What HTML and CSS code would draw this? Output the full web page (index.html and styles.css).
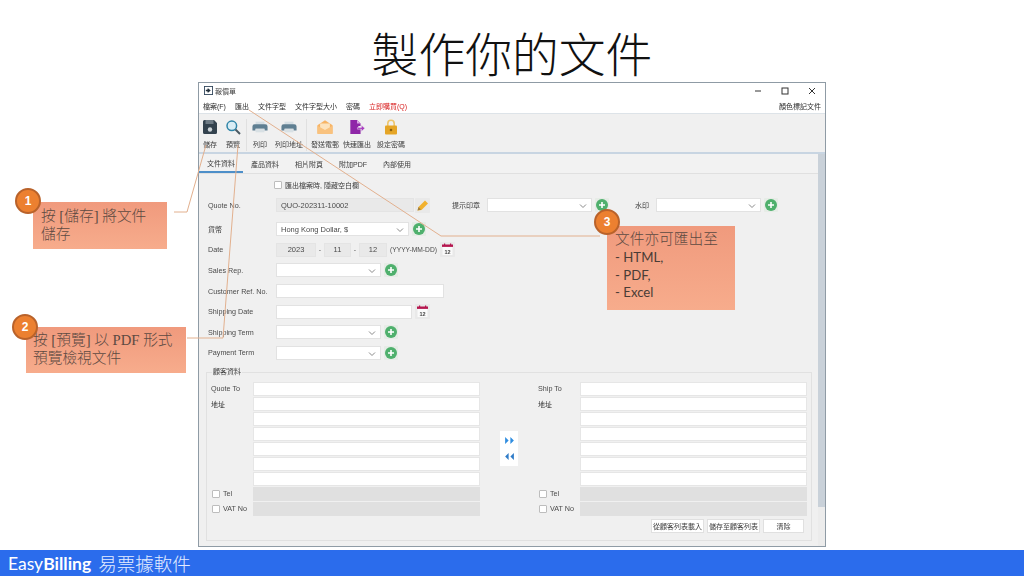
FILE: index.html
```html
<!DOCTYPE html>
<html lang="zh-Hant">
<head>
<meta charset="utf-8">
<title>製作你的文件</title>
<link rel="stylesheet" href="styles.css">
</head>
<body>
<svg class="defs" width="0" height="0">
  <symbol id="chev" viewBox="0 0 8 6"><path d="M1 1.5 4 4.5 7 1.5" fill="none" stroke="#8a8a8a" stroke-width="1"/></symbol>
  <symbol id="plus" viewBox="0 0 14 14"><rect width="14" height="14" rx="1" fill="#e6ece6"/><circle cx="7" cy="7" r="6" fill="#4fb06d"/><path d="M7 4v6M4 7h6" stroke="#fff" stroke-width="1.6"/></symbol>
  <symbol id="printer" viewBox="0 0 18 16"><path d="M4 2h10v4H4z" fill="#d5dee3"/><path d="M3 5h12a2.500 2.500 0 0 1 2.500 2.500V12H14V10H4v2H.5V7.500A2.500 2.500 0 0 1 3 5z" fill="#5f7f92"/><path d="M4 10h10v4H4z" fill="#d8e0e4"/></symbol>
</svg>
<div class="slide">
  <h1 class="title">製作你的文件</h1>
  <div class="spacer"></div>
  <footer class="footer"><span class="brand">Easy<b>Billing</b></span><span class="brand-cjk">易票據軟件</span></footer>

  <section class="window">
    <header class="titlebar">
      <svg class="app-icon" viewBox="0 0 10 10"><rect x=".5" y=".5" width="9" height="9" fill="#fff" stroke="#34495e"/><path d="M2 5h3.200M4 3l2.400 2L4 7" stroke="#22303c" stroke-width="1.400" fill="none"/></svg>
      <span class="win-title">報價單</span>
      <div class="win-controls">
        <svg viewBox="0 0 10 10"><path d="M2 5h6" stroke="#333"/></svg>
        <svg viewBox="0 0 10 10"><rect x="2" y="2" width="6" height="6" fill="none" stroke="#333"/></svg>
        <svg viewBox="0 0 10 10"><path d="M2 2l6 6M8 2l-6 6" stroke="#333"/></svg>
      </div>
    </header>
    <nav class="menubar">
      <span>檔案(F)</span><span>匯出</span><span>文件字型</span><span>文件字型大小</span><span>密碼</span><span class="menu-red">立即購買(Q)</span>
      <span class="menu-right">顏色標記文件</span>
    </nav>
    <div class="toolbar">
      <div class="tool tool-first"><svg viewBox="0 0 16 16"><path d="M1 2.500A1.500 1.500 0 0 1 2.500 1H12l3 3v9.500a1.500 1.500 0 0 1-1.500 1.500h-11A1.500 1.500 0 0 1 1 13.500z" fill="#33424e"/><rect x="3.500" y="1" width="8" height="4" fill="#6e7b85"/><circle cx="8" cy="10.500" r="2.200" fill="#cfd6da"/></svg><span>儲存</span></div>
      <div class="tool tool-g9"><svg viewBox="0 0 16 16"><circle cx="6.800" cy="6.800" r="4.800" fill="#d9edf5" stroke="#2f85a8" stroke-width="1.500"/><path d="M10.500 10.500 15 15" stroke="#4a5a64" stroke-width="2"/></svg><span>預覽</span></div>
      <div class="sep"></div>
      <div class="tool tool-g6"><svg viewBox="0 0 18 16"><use href="#printer"/></svg><span>列印</span></div>
      <div class="tool tool-g8"><svg viewBox="0 0 18 16"><use href="#printer"/></svg><span>列印地址</span></div>
      <div class="sep sep-b"></div>
      <div class="tool tool-g4"><svg viewBox="0 0 18 16"><path d="M9 .5 17.500 6v9.500H.5V6z" fill="#f7b465"/><path d="M3.500 4h11v5L9 12 3.500 9z" fill="#fde3bd"/><path d="M.5 6.500 9 11.500l8.500-5v9H.5z" fill="#f9c27e"/></svg><span>發送電郵</span></div>
      <div class="tool tool-g4"><svg viewBox="0 0 18 16"><path d="M1.500 0H9l4 4v3h-2.500v3H13v6H1.500z" fill="#8f27a8"/><path d="M9 0v4h4z" fill="#d9a5e3"/><path d="M9.500 8.500H14V6l3.800 3.500L14 13v-2.500H9.500z" fill="#a83dc0" stroke="#f0f0f0" stroke-width=".5"/></svg><span>快速匯出</span></div>
      <div class="tool tool-g6"><svg viewBox="0 0 16 16"><path d="M4.800 7V4.500a3.200 3.200 0 0 1 6.400 0V7" fill="none" stroke="#eec66c" stroke-width="1.600"/><rect x="2" y="6.500" width="12" height="9" rx="1" fill="#e5a526"/><circle cx="8" cy="11" r="1.300" fill="#8a5f10"/></svg><span>設定密碼</span></div>
    </div>
    <div class="body">
      <div class="tabs-panel">
        <div class="tabs">
          <span class="tab tab-on">文件資料</span><span class="tab">產品資料</span><span class="tab">相片附頁</span><span class="tab">附加PDF</span><span class="tab">內部使用</span>
        </div>
        <div class="page">
          <label class="check-row"><i class="box"></i>匯出檔案時, 隱藏空白欄</label>
          <div class="row row-quote">
            <span class="lbl">Quote No.</span>
            <div class="field grey w138">QUO-202311-10002</div>
            <span class="icon-btn"><svg viewBox="0 0 15 15"><rect width="15" height="15" rx="1" fill="#e9e9e9"/><path d="M2.500 12.500l1-3.500 6.500-6.500 3 3-6.500 6.500z" fill="#f1b12e"/><path d="M2.500 12.500l1-3.500 2.500 2.500z" fill="#a08040"/></svg></span>
            <span class="lbl-cjk ml22">提示印章</span>
            <div class="field sel w105"><svg class="chev"><use href="#chev"/></svg></div>
            <svg class="plus"><use href="#plus"/></svg>
            <span class="lbl-cjk ml27">水印</span>
            <div class="field sel w105"><svg class="chev"><use href="#chev"/></svg></div>
            <svg class="plus"><use href="#plus"/></svg>
          </div>
          <div class="row row-cur">
            <span class="lbl lbl-c">貨幣</span>
            <div class="field sel w133">Hong Kong Dollar, $<svg class="chev"><use href="#chev"/></svg></div>
            <svg class="plus"><use href="#plus"/></svg>
          </div>
          <div class="row">
            <span class="lbl">Date</span>
            <div class="field grey ctr w40">2023</div><span class="dash">-</span>
            <div class="field grey ctr w27">11</div><span class="dash">-</span>
            <div class="field grey ctr w28">12</div>
            <span class="fmt">(YYYY-MM-DD)</span>
            <svg class="cal" viewBox="0 0 15 15"><rect width="15" height="15" rx="1" fill="#e9e9e9"/><rect x="2.500" y="3" width="10" height="10" fill="#fafafa"/><rect x="2" y="2.500" width="11" height="2.400" fill="#b5174f"/><rect x="4" y="1.500" width="1.200" height="2" fill="#b5174f"/><rect x="10" y="1.500" width="1.200" height="2" fill="#b5174f"/><text x="7.500" y="11.500" text-anchor="middle" class="cal-num">12</text></svg>
          </div>
          <div class="row">
            <span class="lbl">Sales Rep.</span>
            <div class="field sel w105"><svg class="chev"><use href="#chev"/></svg></div>
            <svg class="plus"><use href="#plus"/></svg>
          </div>
          <div class="row">
            <span class="lbl">Customer Ref. No.</span>
            <div class="field w168"></div>
          </div>
          <div class="row">
            <span class="lbl">Shipping Date</span>
            <div class="field w136"></div>
            <svg class="cal" viewBox="0 0 15 15"><rect width="15" height="15" rx="1" fill="#e9e9e9"/><rect x="2.500" y="3" width="10" height="10" fill="#fafafa"/><rect x="2" y="2.500" width="11" height="2.400" fill="#b5174f"/><rect x="4" y="1.500" width="1.200" height="2" fill="#b5174f"/><rect x="10" y="1.500" width="1.200" height="2" fill="#b5174f"/><text x="7.500" y="11.500" text-anchor="middle" class="cal-num">12</text></svg>
          </div>
          <div class="row">
            <span class="lbl">Shipping Term</span>
            <div class="field sel w105"><svg class="chev"><use href="#chev"/></svg></div>
            <svg class="plus"><use href="#plus"/></svg>
          </div>
          <div class="row">
            <span class="lbl">Payment Term</span>
            <div class="field sel w105"><svg class="chev"><use href="#chev"/></svg></div>
            <svg class="plus"><use href="#plus"/></svg>
          </div>
          <fieldset class="customer">
            <legend>顧客資料</legend>
            <div class="cust-grid">
              <div class="party">
                <span>Quote To</span><div class="cell"></div>
                <span class="cjk">地址</span><div class="cell"></div>
                <span></span><div class="cell"></div>
                <span></span><div class="cell"></div>
                <span></span><div class="cell"></div>
                <span></span><div class="cell"></div>
                <span></span><div class="cell"></div>
                <label class="chk"><i class="box"></i>Tel</label><div class="cell off"></div>
                <label class="chk"><i class="box"></i>VAT No</label><div class="cell off"></div>
              </div>
              <div class="arrows">
                <svg viewBox="0 0 12 8"><path d="M1 0l4 4-4 4zM7 0l4 4-4 4z" fill="#2f8de0"/></svg>
                <svg viewBox="0 0 12 8"><path d="M5 0L1 4l4 4zM11 0L7 4l4 4z" fill="#2f7cc8"/></svg>
              </div>
              <div class="party">
                <span>Ship To</span><div class="cell"></div>
                <span class="cjk">地址</span><div class="cell"></div>
                <span></span><div class="cell"></div>
                <span></span><div class="cell"></div>
                <span></span><div class="cell"></div>
                <span></span><div class="cell"></div>
                <span></span><div class="cell"></div>
                <label class="chk"><i class="box"></i>Tel</label><div class="cell off"></div>
                <label class="chk"><i class="box"></i>VAT No</label><div class="cell off"></div>
              </div>
            </div>
            <div class="cust-actions">
              <button class="btn">從顧客列表載入</button><button class="btn">儲存至顧客列表</button><button class="btn btn-clear">清除</button>
            </div>
          </fieldset>
        </div>
      </div>
      <div class="scrollbar"><div class="thumb"></div></div>
    </div>
  </section>

  <svg class="leaders" viewBox="0 0 1024 576">
    <path d="M174 212H187L206 145"/>
    <path d="M187 338H223L238 145"/>
    <path d="M600 236H441L249 110"/>
  </svg>

  <div class="callout c1">按 [儲存] 將文件<br>儲存</div>
  <div class="callout c2">按 [預覽] 以 PDF 形式<br>預覽檢視文件</div>
  <div class="callout c3">文件亦可匯出至<br><span class="latin">- HTML,<br>- PDF,<br>- Excel</span></div>
  <span class="badge b1">1</span>
  <span class="badge b2">2</span>
  <span class="badge b3">3</span>
</div>
</body>
</html>
```
FILE: styles.css
```css
* { box-sizing: border-box; }
html, body { margin: 0; padding: 0; }
body { width: 1024px; height: 576px; overflow: hidden; background: #fff; font-family: "Liberation Sans", "Noto Sans CJK TC", sans-serif; }
.defs { position: absolute; }
.cal-num { font: 700 5.500px "Liberation Sans", sans-serif; fill: #444; }

.slide { position: relative; width: 1024px; height: 576px; display: flex; flex-direction: column; }
.title { margin: 0; padding-top: 20px; text-align: center; font: 300 46.800px/64px "Noto Sans CJK TC", sans-serif; color: #111; }
.spacer { flex: 1; }
.footer { height: 26px; background: #2b6cec; color: #fff; display: flex; align-items: center; padding-left: 8px; gap: 7px; }
.brand { font: 400 17.500px "Lato", sans-serif; }
.brand b { font-weight: 700; }
.brand-cjk { font: 300 18.500px "Noto Sans CJK TC", sans-serif; color: #e4ecff; }

.window { position: absolute; left: 198px; top: 82px; width: 628px; height: 465px; background: #fff; border: 1px solid #8f9ba5; font-size: 7px; color: #3c3c3c; display: flex; flex-direction: column; filter: blur(.35px); }
.titlebar { height: 15px; flex: none; display: flex; align-items: center; padding-left: 5px; gap: 2px; }
.app-icon { width: 9px; height: 9px; }
.win-title { color: #444; }
.win-controls { margin-left: auto; display: flex; gap: 17px; padding-right: 8px; }
.win-controls svg { width: 10px; height: 10px; }
.menubar { height: 16px; flex: none; display: flex; align-items: center; padding: 0 4px; gap: 9px; border-bottom: 1px solid #dde3e8; color: #2e2e2e; }
.menu-red { color: #d81e1e; }
.menu-right { margin-left: auto; }

.toolbar { height: 40px; flex: none; background: #f0f0f0; border-bottom: 2px solid #c8d5e2; display: flex; align-items: flex-start; padding-top: 5px; }
.tool { display: flex; flex-direction: column; align-items: center; gap: 4px; color: #3c3c3c; }
.tool svg { width: 16px; height: 16px; margin: 0 -1px; }
.tool-first { margin-left: 4px; }
.tool-g9 { margin-left: 9px; }
.tool-g6 { margin-left: 6px; }
.tool-g8 { margin-left: 8px; }
.tool-g4 { margin-left: 4px; }
.sep { width: 1px; height: 32px; background: #e0e0e0; margin-left: 6px; }
.sep-b { margin-left: 3px; }

.body { flex: 1; display: flex; background: #f0f0f0; min-height: 0; }
.tabs-panel { flex: 1; min-width: 0; display: flex; flex-direction: column; }
.tabs { height: 20px; flex: none; background: #f2f2f2; display: flex; border-bottom: 1px solid #e0e0e0; }
.tab { width: 44px; display: flex; align-items: center; justify-content: center; color: #3c3c3c; }
.tab-on { border-bottom: 2px solid #4d8fc9; }
.page { flex: 1; padding: 6px 0 0 9px; display: flex; flex-direction: column; }
.check-row { display: flex; align-items: center; gap: 3px; height: 10px; margin-left: 66px; }
.box { width: 8px; height: 8px; border: 1px solid #bdbdbd; background: #fff; display: block; flex: none; border-radius: 1px; }

.row { height: 20.600px; display: flex; align-items: center; flex: none; }
.row-quote { margin-top: 5px; }
.row-cur { margin-top: 3.400px; }
.lbl { width: 68px; flex: none; color: #4a4a4a; font-size: 7.200px; white-space: nowrap; }
.lbl-c { color: #2e2e2e; font-size: 7px; }
.lbl-cjk { color: #3c3c3c; margin-right: 7px; }
.ml22 { margin-left: 22px; }
.ml27 { margin-left: 26px; }
.field { height: 14px; background: #fff; border: 1px solid #e2e2e2; font-size: 7.500px; color: #4a4a4a; display: flex; align-items: center; padding-left: 4px; flex: none; }
.grey { background: #e9e9e9; border-color: #e4e4e4; }
.ctr { justify-content: center; padding: 0; }
.sel { position: relative; }
.chev { position: absolute; right: 4px; top: 4px; width: 8px; height: 6px; }
.w40 { width: 40px; }
.w27 { width: 27px; }
.w28 { width: 28px; }
.w105 { width: 105px; }
.w133 { width: 133px; }
.w136 { width: 136px; }
.w138 { width: 138px; }
.w168 { width: 168px; }
.dash { width: 8px; text-align: center; color: #4a4a4a; }
.fmt { margin-left: 3px; font-size: 6.700px; color: #4a4a4a; white-space: nowrap; }
.plus { width: 14px; height: 14px; margin-left: 3px; flex: none; }
.cal { width: 15px; height: 15px; margin-left: 3px; flex: none; }
.icon-btn { width: 15px; height: 15px; margin-left: 1px; flex: none; }
.icon-btn svg { display: block; width: 15px; height: 15px; }

.customer { margin: 4px 6px 0 -2px; padding: 0 4px 0 4px; border: 1px solid #e1e1e1; height: 174px; min-width: 0; }
.customer legend { padding: 0 1px; margin-left: 1px; line-height: 10px; color: #3c3c3c; }
.cust-grid { display: grid; grid-template-columns: 269px 18px 269px; column-gap: 20px; padding-top: 4px; }
.party { display: grid; grid-template-columns: 42px 1fr; grid-auto-rows: 15px; color: #4a4a4a; align-items: center; font-size: 7.200px; white-space: nowrap; }
.party .cjk { font-size: 7px; color: #2e2e2e; }
.cell { height: 14px; background: #fff; border: 1px solid #e6e6e6; }
.cell.off { background: #e0e0e0; border: 0; }
.chk { display: flex; align-items: center; gap: 3px; margin-left: 1px; }
.arrows { margin-top: 50px; height: 35px; background: #fff; display: flex; flex-direction: column; align-items: center; justify-content: space-around; padding: 2px 0; }
.arrows svg { width: 11px; height: 7px; }
.cust-actions { display: flex; justify-content: flex-end; gap: 3px; margin: 3px 3px 0 0; }
.btn { width: 53px; height: 14px; padding: 0; background: #fff; border: 1px solid #e0e0e0; font: 7px "Noto Sans CJK TC", sans-serif; color: #3c3c3c; white-space: nowrap; }
.btn-clear { width: 41px; }

.scrollbar { width: 7px; flex: none; background: #ececec; }
.thumb { height: 353px; background: #c9d1d9; }

.leaders { position: absolute; left: 0; top: 0; width: 1024px; height: 576px; pointer-events: none; }
.leaders path { fill: none; stroke: #e2b08e; stroke-width: 1; }

.callout { position: absolute; background: linear-gradient(#f09a7d, #f7ac8c); color: #5d4a42; font: 300 14.700px/17.800px "Liberation Serif", "Noto Sans CJK TC", serif; white-space: nowrap; }
.c1 { left: 33px; top: 202px; width: 134px; height: 47px; padding: 6px 0 0 8px; }
.c2 { left: 26px; top: 327px; width: 160px; height: 46px; padding: 5px 0 0 7px; }
.c3 { left: 607px; top: 226px; width: 128px; height: 84px; padding: 5px 0 0 8px; }
.latin { font: 400 13.200px/17.600px "Lato", sans-serif; color: #4a3c36; }
.badge { position: absolute; width: 26px; height: 26px; border-radius: 50%; background: #ec8030; border: 2px solid #b9622a; color: #fff; font: 700 12px/22px "Liberation Sans", sans-serif; text-align: center; }
.b1 { left: 15px; top: 188px; }
.b2 { left: 12px; top: 314px; }
.b3 { left: 594px; top: 209px; }
```
